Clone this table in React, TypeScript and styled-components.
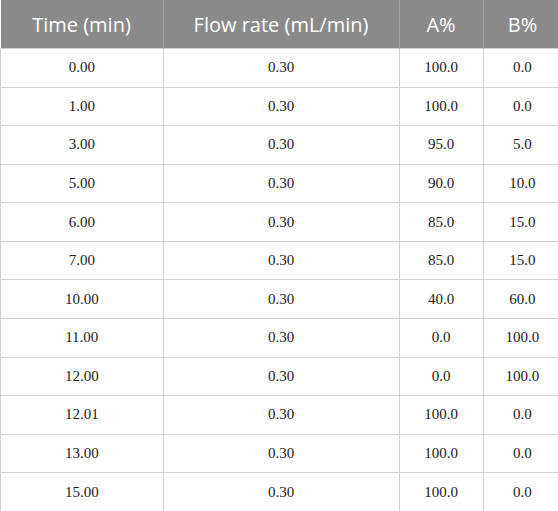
import React from "react";
import styled, { createGlobalStyle } from "styled-components";

const Global = createGlobalStyle`
  html, body { margin: 0; padding: 0; background: #ffffff; }
`;

const Table = styled.table`
  width: 558px;
  border-collapse: collapse;
  table-layout: fixed;
`;

const HeadCell = styled.th<{ $w: number }>`
  width: ${(p) => p.$w}px;
  height: 48px;
  padding: 0;
  background: #8a8a8a;
  color: #ffffff;
  font-family: "Open Sans", "Noto Sans", sans-serif;
  font-size: 20px;
  font-weight: 400;
  text-align: center;
  vertical-align: middle;
  border-left: 1px solid #a3a3a3;
  &:first-child { border-left: none; }
`;

const Row = styled.tr`
  height: 38.58px;
`;

const Cell = styled.td`
  padding: 0;
  border: 1px solid #d3d3d3;
  font-family: "Liberation Serif", "Times New Roman", serif;
  font-size: 15px;
  color: #1a1a1a;
  text-align: center;
  vertical-align: middle;
`;

const rows: [string, string, string, string][] = [
  ["0.00", "0.30", "100.0", "0.0"],
  ["1.00", "0.30", "100.0", "0.0"],
  ["3.00", "0.30", "95.0", "5.0"],
  ["5.00", "0.30", "90.0", "10.0"],
  ["6.00", "0.30", "85.0", "15.0"],
  ["7.00", "0.30", "85.0", "15.0"],
  ["10.00", "0.30", "40.0", "60.0"],
  ["11.00", "0.30", "0.0", "100.0"],
  ["12.00", "0.30", "0.0", "100.0"],
  ["12.01", "0.30", "100.0", "0.0"],
  ["13.00", "0.30", "100.0", "0.0"],
  ["15.00", "0.30", "100.0", "0.0"],
];

export default function App() {
  return (
    <>
      <Global />
      <Table>
        <thead>
          <tr>
            <HeadCell $w={162}>Time (min)</HeadCell>
            <HeadCell $w={235}>Flow rate (mL/min)</HeadCell>
            <HeadCell $w={83}>A%</HeadCell>
            <HeadCell $w={78}>B%</HeadCell>
          </tr>
        </thead>
        <tbody>
          {rows.map((r, i) => (
            <Row key={i}>
              {r.map((c, j) => (
                <Cell key={j}>{c}</Cell>
              ))}
            </Row>
          ))}
        </tbody>
      </Table>
    </>
  );
}
